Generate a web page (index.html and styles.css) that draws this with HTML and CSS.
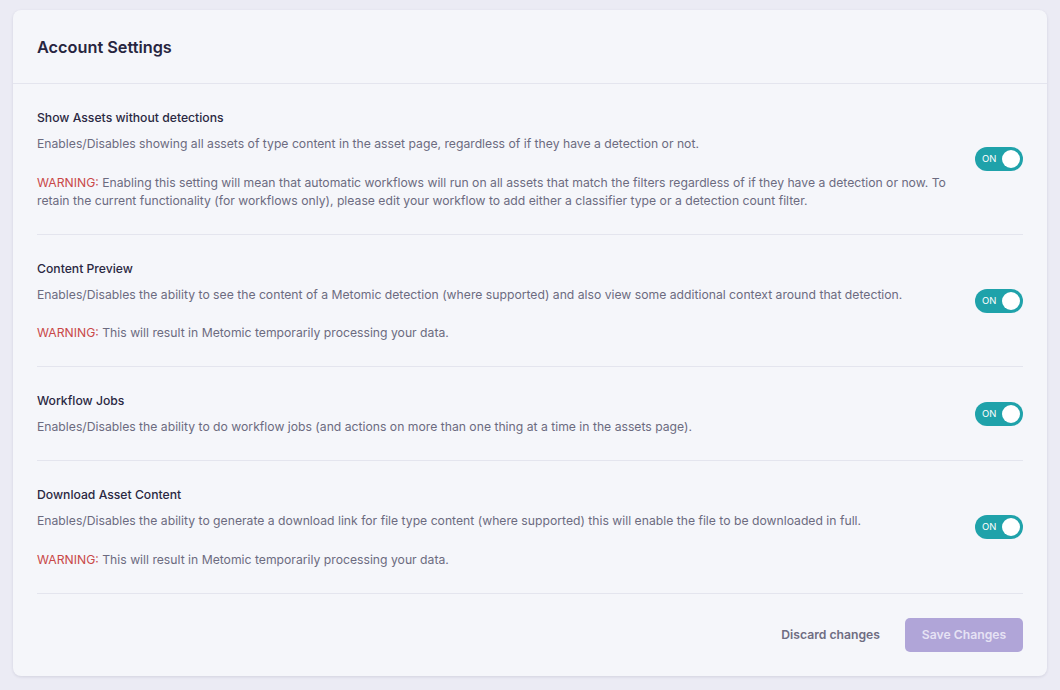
FILE: index.html
```html
<!DOCTYPE html>
<html lang="en">
<head>
<meta charset="utf-8">
<title>Account Settings</title>
<link rel="stylesheet" href="styles.css">
</head>
<body>
<div class="card">
  <div class="card-header">
    <h1 class="card-title">Account Settings</h1>
  </div>
  <div class="card-body">
    <div class="setting">
      <div class="setting-text">
        <div class="setting-title">Show Assets without detections</div>
        <p class="setting-desc">Enables/Disables showing all assets of type content in the asset page, regardless of if they have a detection or not.</p>
        <p class="setting-warn"><span class="warn-label">WARNING:</span> Enabling this setting will mean that automatic workflows will run on all assets that match the filters regardless of if they have a detection or now. To retain the current functionality (for workflows only), please edit your workflow to add either a classifier type or a detection count filter.</p>
      </div>
      <div class="toggle"><span class="toggle-label">ON</span><span class="toggle-knob"></span></div>
    </div>
    <div class="setting">
      <div class="setting-text">
        <div class="setting-title">Content Preview</div>
        <p class="setting-desc">Enables/Disables the ability to see the content of a Metomic detection (where supported) and also view some additional context around that detection.</p>
        <p class="setting-warn"><span class="warn-label">WARNING:</span> This will result in Metomic temporarily processing your data.</p>
      </div>
      <div class="toggle"><span class="toggle-label">ON</span><span class="toggle-knob"></span></div>
    </div>
    <div class="setting">
      <div class="setting-text">
        <div class="setting-title">Workflow Jobs</div>
        <p class="setting-desc">Enables/Disables the ability to do workflow jobs (and actions on more than one thing at a time in the assets page).</p>
      </div>
      <div class="toggle"><span class="toggle-label">ON</span><span class="toggle-knob"></span></div>
    </div>
    <div class="setting">
      <div class="setting-text">
        <div class="setting-title">Download Asset Content</div>
        <p class="setting-desc">Enables/Disables the ability to generate a download link for file type content (where supported) this will enable the file to be downloaded in full.</p>
        <p class="setting-warn"><span class="warn-label">WARNING:</span> This will result in Metomic temporarily processing your data.</p>
      </div>
      <div class="toggle"><span class="toggle-label">ON</span><span class="toggle-knob"></span></div>
    </div>
    <div class="card-footer">
      <button class="btn btn-link" type="button">Discard changes</button>
      <button class="btn btn-primary" type="button" disabled>Save Changes</button>
    </div>
  </div>
</div>
</body>
</html>
```

FILE: styles.css
```css
* { box-sizing: border-box; }
html, body { margin: 0; }
body {
  background: #ebebf4;
  padding: 10px 13px 14px;
  font-family: Inter, "Noto Sans", sans-serif;
  color: #2a2842;
}
.card {
  background: #f5f6fa;
  border-radius: 8px;
  box-shadow: 0 1px 3px rgba(40, 40, 80, 0.12);
  height: 666px;
  display: flex;
  flex-direction: column;
}
.card-header {
  padding: 25px 24px 24px;
  border-bottom: 1px solid #e4e5ee;
}
.card-title {
  margin: 0;
  font-size: 16.3px;
  line-height: 24px;
  font-weight: 600;
  color: #27253f;
}
.card-body {
  padding: 0 24px;
  display: flex;
  flex-direction: column;
}
.setting {
  display: flex;
  align-items: center;
  gap: 28px;
  padding: 25px 0 24px;
  border-bottom: 1px solid #e4e5ee;
}
.setting-text { flex: 1; min-width: 0; }
.setting-title {
  font-size: 12.2px;
  line-height: 18px;
  font-weight: 500;
  color: #2a2842;
}
.setting-desc, .setting-warn {
  margin: 8px 0 0;
  font-size: 12.2px;
  line-height: 18px;
  color: #6c6b80;
}
.setting-warn { margin-top: 20.5px; }
.warn-label { color: #c94848; }
.toggle {
  flex: none;
  width: 48px;
  height: 24px;
  border-radius: 12px;
  background: #1fa2aa;
  display: flex;
  align-items: center;
  justify-content: space-between;
  padding: 0 3px 0 7px;
}
.toggle-label {
  color: #ffffff;
  font-size: 9.5px;
  line-height: 12px;
  font-weight: 400;
}
.toggle-knob {
  width: 18px;
  height: 18px;
  border-radius: 50%;
  background: #ffffff;
}
.card-footer {
  display: flex;
  justify-content: flex-end;
  align-items: center;
  gap: 25px;
  padding: 24px 0;
}
.btn {
  font-family: inherit;
  font-size: 12.2px;
  font-weight: 600;
  border: none;
  cursor: pointer;
}
.btn-link {
  background: none;
  color: #6f6d82;
  padding: 0;
}
.btn-primary {
  background: #b0a5d8;
  color: #e6e2f4;
  width: 118px;
  height: 34px;
  border-radius: 5px;
}
```
